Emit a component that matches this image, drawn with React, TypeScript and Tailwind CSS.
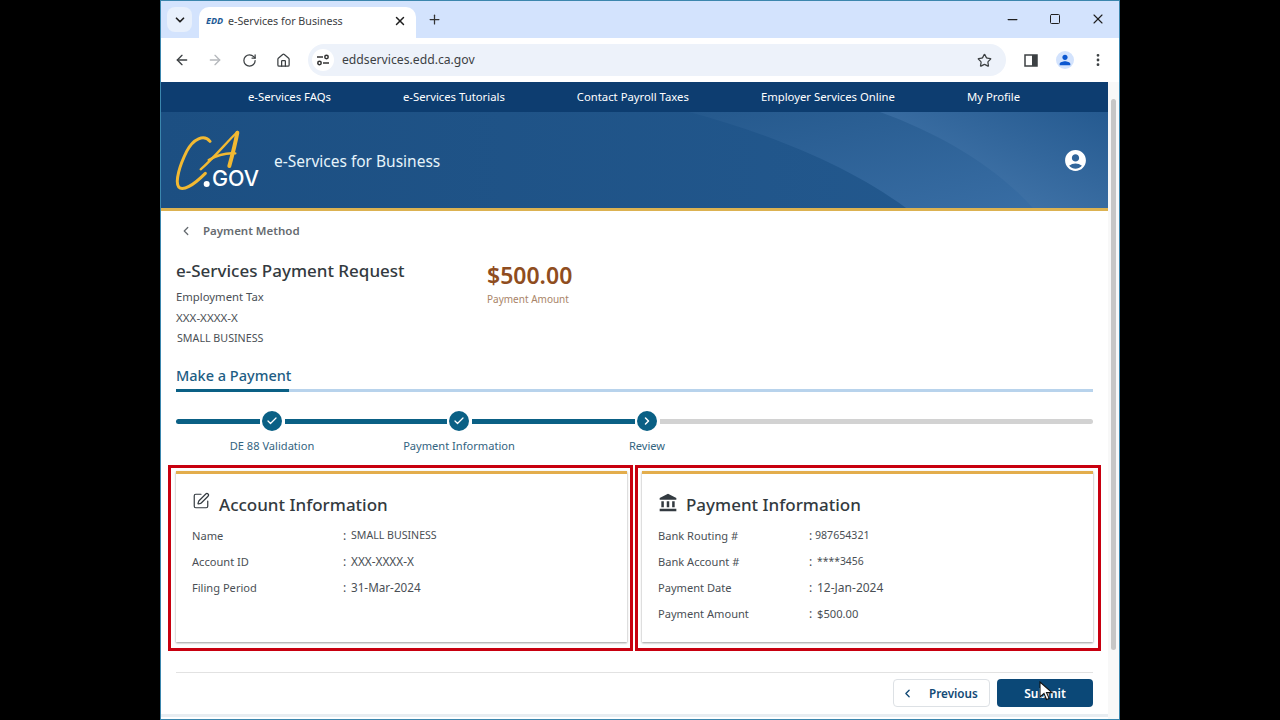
import React from "react";
import {
  ArrowLeft,
  ArrowRight,
  Check,
  ChevronDown,
  ChevronLeft,
  ChevronRight,
  EllipsisVertical,
  House,
  Minus,
  Plus,
  RotateCw,
  Square,
  SquarePen,
  Star,
  X,
} from "lucide-react";
import { MdAccountBalance, MdAccountCircle, MdPerson } from "react-icons/md";

const navLinks = ["e-Services FAQs", "e-Services Tutorials", "Contact Payroll Taxes", "Employer Services Online", "My Profile"];

type Row = { label: string; value: string; valueClass: string };

const accountRows: Row[] = [
  { label: "Name", value: "SMALL BUSINESS", valueClass: "text-[10.6px]" },
  { label: "Account ID", value: "XXX-XXXX-X", valueClass: "text-[11.8px]" },
  { label: "Filing Period", value: "31-Mar-2024", valueClass: "text-[11.7px]" },
];

const paymentRows: Row[] = [
  { label: "Bank Routing #", value: "987654321", valueClass: "-ml-[2px] text-[10.6px]" },
  { label: "Bank Account #", value: "****3456", valueClass: "text-[10.4px]" },
  { label: "Payment Date", value: "12-Jan-2024", valueClass: "text-[12px]" },
  { label: "Payment Amount", value: "$500.00", valueClass: "text-[11.2px]" },
];

const Logo = () => (
  <svg width="85" height="64" viewBox="45 55 255 190" fill="none" className="shrink-0">
    <path d="M150 94C132 72 100 86 80 124C60 164 44 214 56 231C68 245 100 226 136 190" stroke="#f2b932" strokeWidth="9" strokeLinecap="round" />
    <path d="M232 66C204 92 160 146 122 178" stroke="#f2b932" strokeWidth="7" strokeLinecap="round" />
    <path d="M232 68C226 100 218 132 208 168" stroke="#f2b932" strokeWidth="12" strokeLinecap="round" />
    <path d="M146 150C170 136 200 128 226 130" stroke="#f2b932" strokeWidth="7" strokeLinecap="round" />
    <circle cx="140" cy="222" r="9" fill="#fff" />
    <text x="156" y="228" fill="#fff" fontSize="64" fontWeight="500" textLength="141" lengthAdjust="spacingAndGlyphs" fontFamily="Inter, sans-serif">GOV</text>
  </svg>
);

const Card = ({ title, icon, rows, boxClass }: { title: string; icon: React.ReactNode; rows: Row[]; boxClass: string }) => (
  <div className={`border-[3px] border-[#c8000f] pt-[3px] pb-[6px] ${boxClass}`}>
    <div className="h-[171px] border-t-[3px] border-[#e3ad4c] bg-white pl-4 pt-[17px] shadow-[0_1px_2px_rgba(0,0,0,0.4)]">
      <div className="flex h-[27px] items-center gap-[10px] text-[#333a40]">
        {icon}
        <h3 className="text-[17px] font-medium">{title}</h3>
      </div>
      <div className="mt-[5px] text-[#4a4f55]">
        {rows.map((row) => (
          <div key={row.label} className="flex h-[26px] items-center text-[11.1px]">
            <span className="w-[151px]">{row.label}</span>
            <span className="w-[8px] text-[12px]">:</span>
            <span className={row.valueClass}>{row.value}</span>
          </div>
        ))}
      </div>
    </div>
  </div>
);

const StepDot = ({ done }: { done: boolean }) => (
  <div className="ml-[2px] mr-[3px] flex h-5 w-5 shrink-0 items-center justify-center rounded-full bg-[#0a6085] text-white">
    {done ? <Check size={12} strokeWidth={2.5} /> : <ChevronRight size={12} strokeWidth={3} />}
  </div>
);

const App = () => {
  return (
    <div className="flex h-[720px] w-[1280px] justify-center overflow-hidden bg-black" style={{ fontFamily: '"Noto Sans", "Open Sans", sans-serif' }}>
      <div className="relative flex h-[720px] w-[960px] flex-col border-x border-t border-b border-[#3b86ad] bg-white">
        {/* tab strip */}
        <div className="flex h-[37px] shrink-0 items-end bg-[#d3e3fd] pl-[6px]">
          <div className="mb-[6px] flex h-[25px] w-[25px] items-center justify-center rounded-lg bg-[#e8f0fc] text-[#1f1f1f]">
            <ChevronDown size={14} strokeWidth={3} />
          </div>
          <div className="ml-[7px] flex h-[31px] w-[217px] items-center rounded-t-[10px] bg-white pb-[3px] pl-[7px] pr-[9px]">
            <span className="w-[22px] text-[9px] font-bold italic text-[#1d5a96]">EDD</span>
            <span className="flex-1 text-[10.7px] text-[#3c4043]">e-Services for Business</span>
            <X size={14} strokeWidth={2.5} className="text-[#1f1f1f]" />
          </div>
          <div className="mb-[11px] ml-[11px] text-[#333]">
            <Plus size={15} strokeWidth={2} />
          </div>
          <div className="mb-[11px] ml-auto flex items-center gap-[29px] pr-[13px] text-[#1f1f1f]">
            <Minus size={15} strokeWidth={2} />
            <Square size={12} strokeWidth={2} />
            <X size={16} strokeWidth={1.7} />
          </div>
        </div>

        {/* toolbar */}
        <div className="flex h-11 shrink-0 items-center rounded-t-lg bg-white pl-[13px] pr-[13px] text-[#3c4043]">
          <ArrowLeft size={16} strokeWidth={2} />
          <ArrowRight size={16} strokeWidth={2} className="ml-[17px] text-[#b5b8bc]" />
          <RotateCw size={15} strokeWidth={2} className="ml-[19px]" />
          <House size={15} strokeWidth={2} className="ml-[19px]" />
          <div className="ml-[17px] flex h-8 w-[698px] items-center rounded-full bg-[#edf2fa] pl-1 pr-[14px]">
            <div className="flex h-[22px] w-[22px] items-center justify-center rounded-full bg-white">
              <svg width="14" height="12" viewBox="0 0 14 12" fill="none" stroke="#333" strokeWidth="1.5">
                <path d="M1 3h6" />
                <circle cx="10.5" cy="3" r="1.7" />
                <circle cx="3.5" cy="9" r="1.7" />
                <path d="M7 9h6" />
              </svg>
            </div>
            <span className="ml-[8px] flex-1 pt-px text-[12.2px] text-[#3c4043]">eddservices.edd.ca.gov</span>
            <Star size={15} strokeWidth={2} />
          </div>
          <svg width="14" height="13" viewBox="0 0 14 13" className="ml-[18px]">
            <path d="M1 1h12v11H1z" fill="#fff" stroke="#3c4043" strokeWidth="1.5" />
            <path d="M8 1h5v11H8z" fill="#3c4043" />
          </svg>
          <div className="ml-[18px] flex h-[18px] w-[18px] items-center justify-center rounded-full bg-[#d3e3fd] text-[#0b57d0]">
            <MdPerson size={16} />
          </div>
          <EllipsisVertical size={16} strokeWidth={2.2} className="ml-[16px]" />
        </div>

        {/* page + scrollbar */}
        <div className="flex min-h-0 flex-1">
          <div className="flex w-[947px] shrink-0 flex-col">
            <div className="flex h-[30px] shrink-0 items-center gap-[72px] bg-[#0d3d70] pl-[87px] text-[11.3px] text-white">
              {navLinks.map((link) => (
                <span key={link}>{link}</span>
              ))}
            </div>

            <header className="relative flex h-[99px] shrink-0 items-center overflow-hidden border-b-[3px] border-[#dcb251] bg-[#1f5386]">
              <svg className="absolute inset-0" width="947" height="96" viewBox="0 0 947 96" preserveAspectRatio="none">
                <defs>
                  <linearGradient id="headerBase" x1="0" y1="0" x2="1" y2="0">
                    <stop offset="0" stopColor="#1c4f82" />
                    <stop offset="1" stopColor="#245a90" />
                  </linearGradient>
                  <linearGradient id="bandA" x1="0" y1="0" x2="1" y2="1">
                    <stop offset="0" stopColor="#25598d" />
                    <stop offset="1" stopColor="#3a6fa6" />
                  </linearGradient>
                  <linearGradient id="bandB" x1="0" y1="1" x2="1" y2="0">
                    <stop offset="0" stopColor="#4a7cb0" />
                    <stop offset="1" stopColor="#255a90" />
                  </linearGradient>
                </defs>
                <rect width="947" height="96" fill="url(#headerBase)" />
                <path d="M528 0C610 22 690 55 745 96H947V0Z" fill="url(#bandA)" />
                <path d="M719 0C780 22 835 55 872 96H947V0Z" fill="url(#bandB)" />
              </svg>
              <div className="relative ml-[14px] flex items-center">
                <Logo />
                <span className="ml-[14px] mt-1 text-[15.5px] text-[#e6f4fb]">e-Services for Business</span>
              </div>
              <MdAccountCircle size={25} className="relative ml-auto mr-[20px] text-white" />
            </header>

            <main className="flex flex-1 flex-col px-[15px]">
              <div className="flex h-[39px] shrink-0 items-center pl-[3px] text-[11.5px] font-semibold text-[#666b70]">
                <ChevronLeft size={14} strokeWidth={2.2} />
                <span className="ml-[10px]">Payment Method</span>
              </div>

              <div className="mt-[9px] flex h-[106px] shrink-0">
                <div className="w-[311px]">
                  <h1 className="h-6 text-[17px] font-medium leading-6 text-[#333a40]">e-Services Payment Request</h1>
                  <div className="mt-[3px] leading-[21px] text-[#4a4f55]">
                    <p className="text-[11.3px]">Employment Tax</p>
                    <p className="text-[11.6px]">XXX-XXXX-X</p>
                    <p className="pl-px text-[10.7px]">SMALL BUSINESS</p>
                  </div>
                </div>
                <div>
                  <div className="mt-[1px] text-[23px] font-semibold leading-[31px] text-[#8f4d20]">$500.00</div>
                  <div className="text-[10px] leading-[16px] text-[#a98468]">Payment Amount</div>
                </div>
              </div>

              <div className="flex h-[24px] shrink-0 items-center pb-[2px]">
                <h2 className="text-[14.5px] font-medium text-[#1d5d84]">Make a Payment</h2>
              </div>
              <div className="flex h-[3px] shrink-0 bg-[#b8d3ec]">
                <div className="w-[113px] bg-[#0a6085]" />
              </div>

              <div className="mt-[19px] flex h-5 shrink-0 items-center">
                <div className="h-[5px] w-[84px] rounded-l-full bg-[#0a6085]" />
                <StepDot done />
                <div className="h-[5px] w-[162px] bg-[#0a6085]" />
                <StepDot done />
                <div className="h-[5px] w-[163px] bg-[#0a6085]" />
                <StepDot done={false} />
                <div className="h-[5px] flex-1 rounded-r-full bg-[#d2d2d2]" />
              </div>
              <div className="mt-[6px] flex h-[18px] shrink-0 text-center text-[11.1px] leading-[18px] text-[#33647f]">
                <span className="w-[192px]">DE 88 Validation</span>
                <span className="w-[182px]">Payment Information</span>
                <span className="w-[194px]">Review</span>
              </div>

              <div className="-ml-2 -mr-2 mt-[10px] flex w-[933px] shrink-0 gap-[2px]">
                <Card
                  title="Account Information"
                  boxClass="w-[465px] pl-[5px] pr-[3px]"
                  icon={<SquarePen size={18} strokeWidth={1.6} className="-mt-2 -mr-[1px]" />}
                  rows={accountRows}
                />
                <Card
                  title="Payment Information"
                  boxClass="w-[466px] pl-[4px] pr-[5px]"
                  icon={<MdAccountBalance size={20} className="-mt-[3px] -mr-[2px] text-[#333a40]" />}
                  rows={paymentRows}
                />
              </div>

              <div className="mt-[21px] h-px w-full shrink-0 bg-[#e2e2e2]" />

              <div className="mt-[6px] flex h-7 shrink-0 justify-end gap-[7px] text-[12px] font-semibold">
                <button className="flex w-[97px] items-center rounded border border-[#dde1e5] bg-white pl-[7px] text-[11.7px] text-[#134a76]">
                  <ChevronLeft size={13} strokeWidth={2.5} />
                  <span className="ml-[15px] pt-px">Previous</span>
                </button>
                <button className="relative w-[96px] rounded bg-[#0b4877] pt-px text-white">
                  Submit
                  <svg className="absolute left-[42px] top-[2px]" width="14" height="20" viewBox="0 0 14 20">
                    <path d="M1 1v15l4-3.5 2.5 6 2.6-1.1-2.6-5.8H13Z" fill="#fff" stroke="#111" strokeWidth="1.1" />
                  </svg>
                </button>
              </div>
            </main>

            <div className="mb-[2px] h-[3px] shrink-0 bg-[#e8edf1]" />
          </div>

          {/* scrollbar */}
          <div className="flex flex-1 justify-center bg-[#f8f8f8] pt-[17px]">
            <div className="h-[551px] w-[5px] rounded-full bg-[#c6c6c6]" />
          </div>
        </div>
      </div>
    </div>
  );
};

export default App;
